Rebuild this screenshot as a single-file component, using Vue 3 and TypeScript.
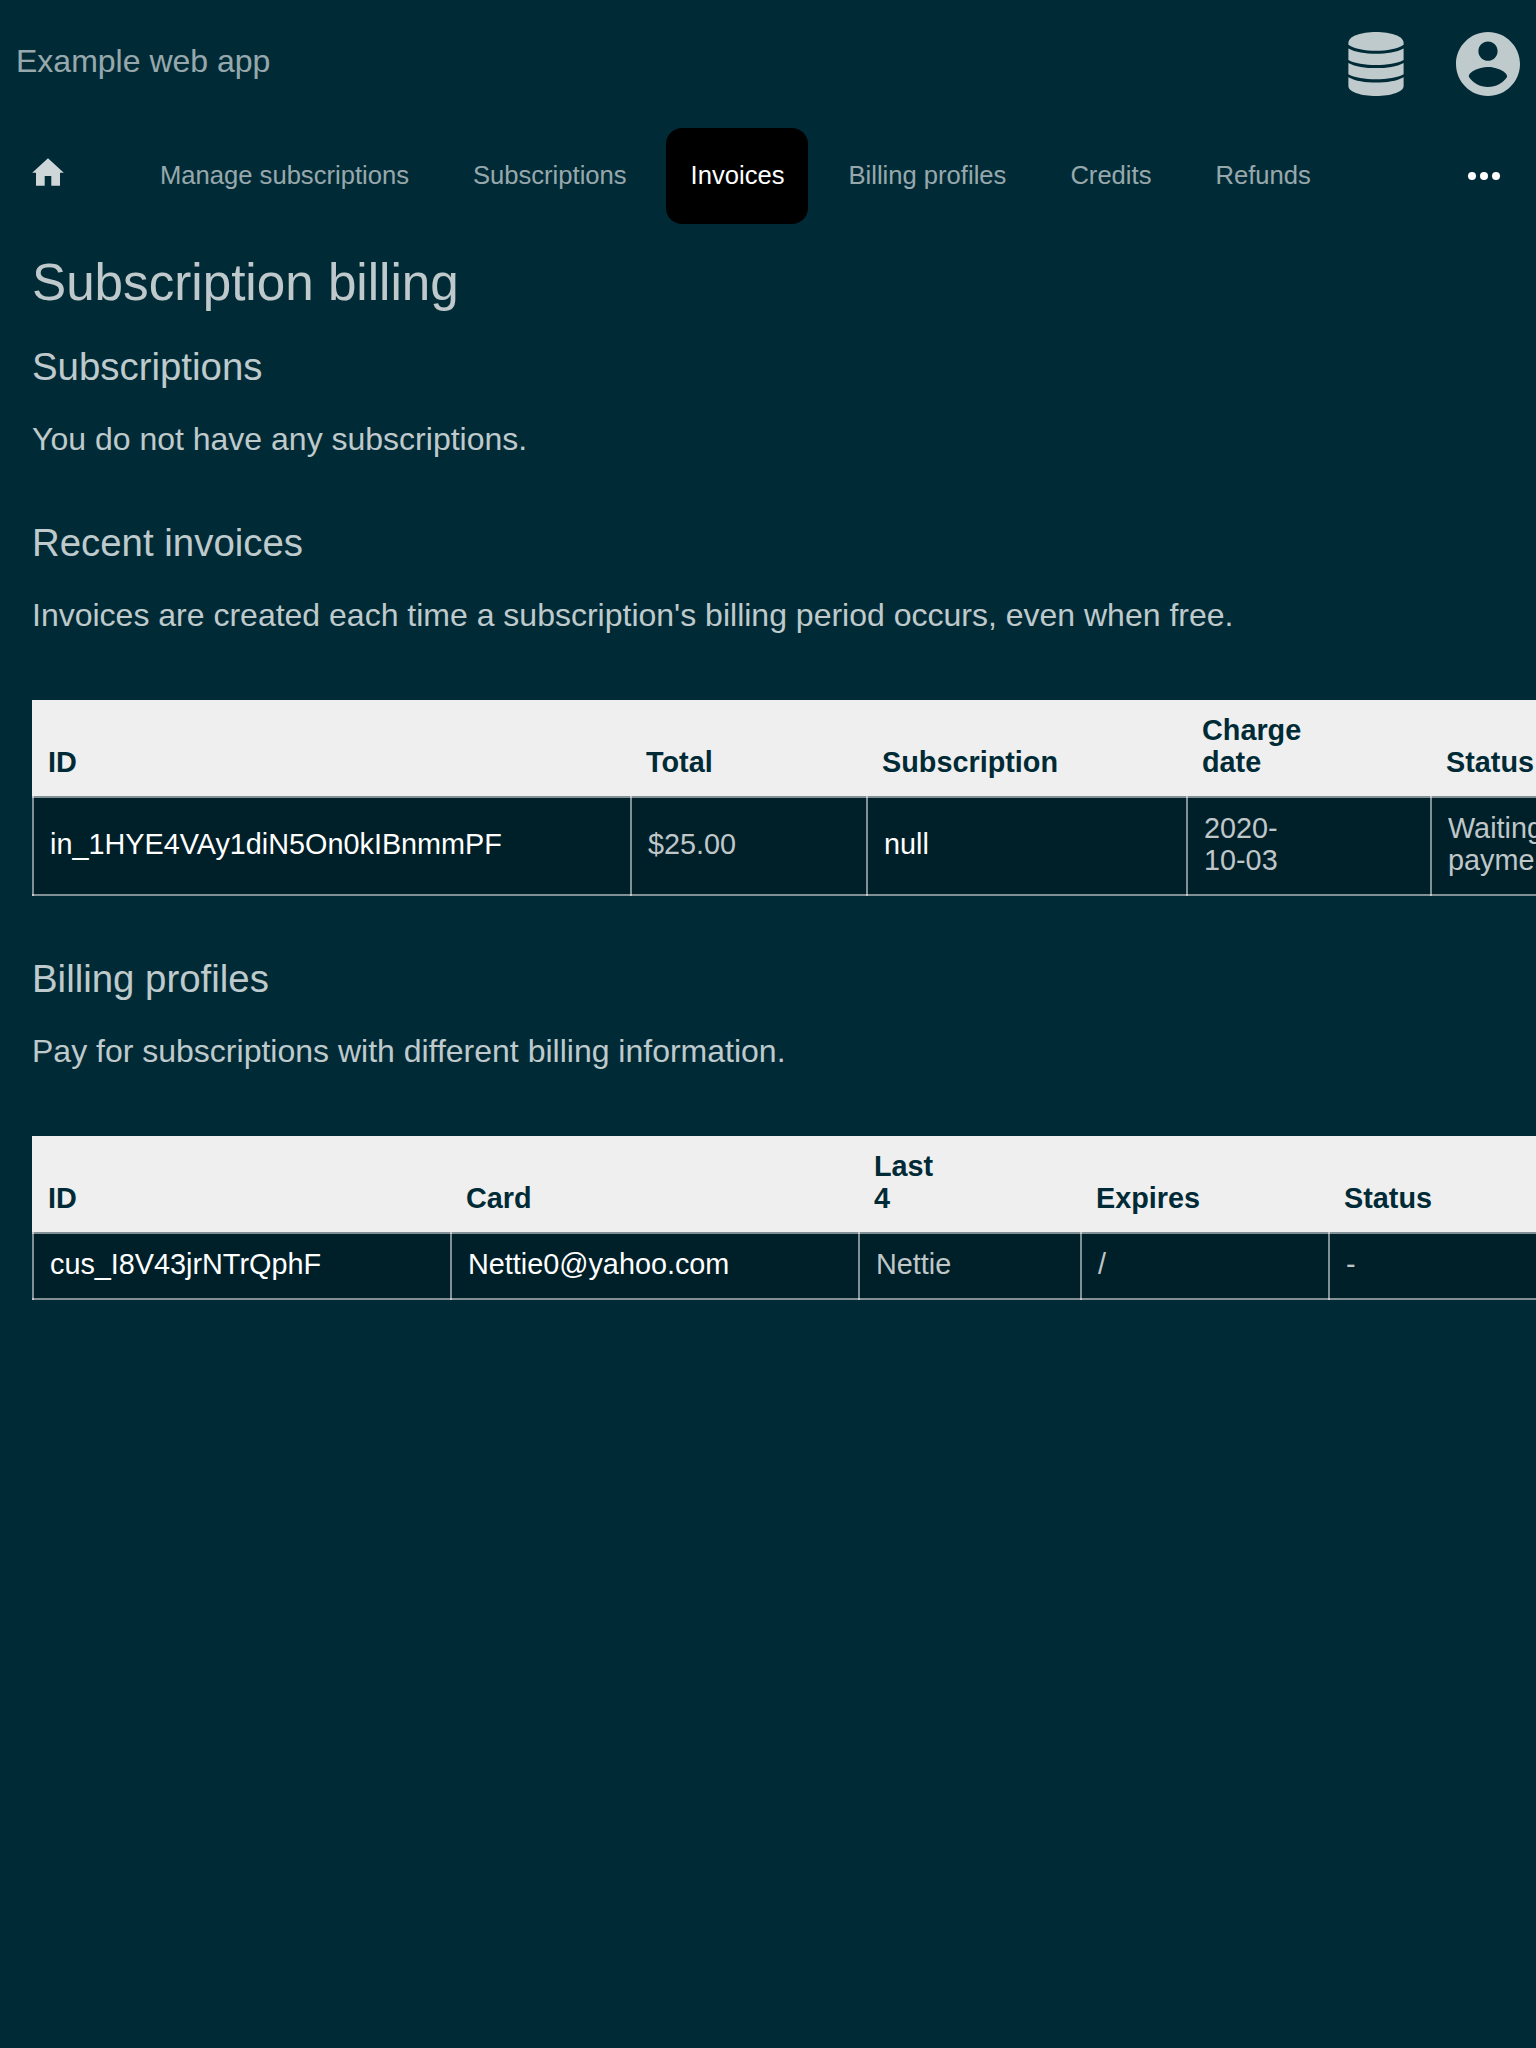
<script setup lang="ts">
interface Cell {
  text: string
  link?: boolean
}
interface Listing {
  widths: number[]
  heads: string[]
  cells: Cell[]
}

const links: string[] = ['Manage subscriptions', 'Subscriptions', 'Invoices', 'Billing profiles', 'Credits', 'Refunds']
const active = 'Invoices'

const invoices: Listing = {
  widths: [598, 236, 320, 244, 202],
  heads: ['ID', 'Total', 'Subscription', 'Charge\ndate', 'Status'],
  cells: [
    { text: 'in_1HYE4VAy1diN5On0kIBnmmPF', link: true },
    { text: '$25.00' },
    { text: 'null', link: true },
    { text: '2020-\n10-03' },
    { text: 'Waiting for\npayment' },
  ],
}

const profiles: Listing = {
  widths: [418, 408, 222, 248, 304],
  heads: ['ID', 'Card', 'Last\n4', 'Expires', 'Status'],
  cells: [
    { text: 'cus_I8V43jrNTrQphF', link: true },
    { text: 'Nettie0@yahoo.com', link: true },
    { text: 'Nettie' },
    { text: '/' },
    { text: '-' },
  ],
}

const sections: { title: string; note: string; listing?: Listing }[] = [
  { title: 'Subscriptions', note: 'You do not have any subscriptions.' },
  {
    title: 'Recent invoices',
    note: "Invoices are created each time a subscription's billing period occurs, even when free.",
    listing: invoices,
  },
  { title: 'Billing profiles', note: 'Pay for subscriptions with different billing information.', listing: profiles },
]
</script>

<template>
  <div class="page">
    <header class="top">
      <div class="brand">Example web app</div>
      <div class="menus">
        <svg class="db" viewBox="-0.4 0 56.8 64" width="56" height="64" preserveAspectRatio="none">
          <path d="M0 11C0 4 13 0 28 0S56 4 56 11v1.8C50 17 39 18.8 28 18.8S6 17 0 12.8z" />
          <path d="M0 16.6C7 20.4 17 21.8 28 21.8S49 20.4 56 16.6V28C50 31.4 39 33 28 33S6 31.4 0 28z" />
          <path d="M0 30.9C7 34.7 17 36.1 28 36.1S49 34.7 56 30.9V42.3C50 45.7 39 47.3 28 47.3S6 45.7 0 42.3z" />
          <path d="M0 45.2C7 49 17 50.6 28 50.6S49 49 56 45.2V54C56 60 43 64 28 64S0 60 0 54z" />
        </svg>
        <svg viewBox="2 2 20 20" width="64" height="64">
          <path
            d="M12 2C6.48 2 2 6.48 2 12s4.48 10 10 10 10-4.48 10-10S17.52 2 12 2zm0 3c1.66 0 3 1.34 3 3s-1.34 3-3 3-3-1.34-3-3 1.34-3 3-3zm0 14.2c-2.5 0-4.71-1.28-6-3.22.03-1.99 4-3.08 6-3.08 1.99 0 5.97 1.09 6 3.08-1.29 1.94-3.5 3.22-6 3.22z"
          />
        </svg>
      </div>
    </header>

    <nav class="nav">
      <a class="home">
        <svg viewBox="0 0 32 32" width="32" height="32">
          <path d="M16 2.3L31.8 16.7H28V29.7H19.3V20H12.7V29.7H4V16.7H.2z" />
        </svg>
      </a>
      <a v-for="link in links" :key="link" class="link" :class="{ active: link === active }">{{ link }}</a>
      <svg class="more" viewBox="0 0 32 8" width="32" height="8">
        <circle cx="4" cy="4" r="4" />
        <circle cx="16" cy="4" r="4" />
        <circle cx="28" cy="4" r="4" />
      </svg>
    </nav>

    <main class="content">
      <h1>Subscription billing</h1>
      <section v-for="s in sections" :key="s.title" :class="{ listed: s.listing }">
        <h2>{{ s.title }}</h2>
        <p>{{ s.note }}</p>
        <table v-if="s.listing">
          <colgroup>
            <col v-for="(w, i) in s.listing.widths" :key="i" :style="{ width: w + 'px' }" />
          </colgroup>
          <thead>
            <tr>
              <th v-for="h in s.listing.heads" :key="h">{{ h }}</th>
            </tr>
          </thead>
          <tbody>
            <tr>
              <td v-for="c in s.listing.cells" :key="c.text" :class="{ ref: c.link }">{{ c.text }}</td>
            </tr>
          </tbody>
        </table>
      </section>
    </main>
  </div>
</template>

<style>
html,
body {
  margin: 0;
  background: #002b36;
}
</style>

<style scoped>
.page {
  width: 100%;
  height: 2048px;
  overflow: hidden;
  background: #002b36;
  color: rgba(255, 255, 255, 0.75);
  font-family: "Liberation Sans", Arial, sans-serif;
  font-size: 32px;
}
.top {
  display: flex;
  justify-content: space-between;
  height: 128px;
  box-sizing: border-box;
  padding: 32px 16px;
}
.brand {
  line-height: 58px;
  color: rgba(255, 255, 255, 0.6);
}
.menus {
  display: flex;
  gap: 52px;
}
.menus svg {
  display: block;
  fill: #bfcacd;
}
.nav {
  display: flex;
  align-items: center;
  height: 96px;
  padding: 0 36px 0 32px;
}
.home {
  width: 96px;
  height: 32px;
  margin-top: -8px;
}
.home svg {
  display: block;
  fill: #ced6d8;
}
.link {
  height: 96px;
  box-sizing: border-box;
  margin: 0 8px;
  padding: 0 24px;
  border-radius: 16px;
  font-size: 25.6px;
  line-height: 95px;
  white-space: nowrap;
  color: rgba(255, 255, 255, 0.6);
}
.link.active {
  margin: 0 8.6px 0 7.4px;
  padding: 0 23.4px 0 24.6px;
  background: #000;
  color: #fff;
}
.more {
  margin-left: auto;
  fill: #fff;
}
.content {
  padding: 27px 0 0 32px;
}
h1,
h2,
p {
  margin: 0;
  font-weight: 400;
}
h1 {
  margin-bottom: 28px;
  font-size: 51.2px;
  line-height: 64px;
}
h2 {
  margin-bottom: 30px;
  font-size: 38.4px;
  line-height: 48px;
}
p {
  font-size: 32px;
  line-height: 36px;
}
section {
  margin-bottom: 62px;
}
section.listed {
  margin-bottom: 59px;
}
table {
  width: 1600px;
  margin-top: 67px;
  table-layout: fixed;
  border-collapse: separate;
  border-spacing: 0;
  font-size: 28.8px;
  line-height: 32px;
}
th {
  height: 64px;
  padding: 14px 16px 18px;
  background: #efefef;
  color: #002b36;
  font-weight: 700;
  text-align: left;
  vertical-align: bottom;
  white-space: pre-line;
}
td {
  --rule: linear-gradient(rgba(255, 255, 255, 0.5), rgba(255, 255, 255, 0.5));
  padding: 16px 16px 20px 18px;
  background:
    var(--rule) left top / 2px 100% no-repeat,
    var(--rule) left top / 100% 2px no-repeat,
    var(--rule) left bottom / 100% 2px no-repeat,
    #002029;
  vertical-align: middle;
  white-space: pre-line;
}
td.ref {
  color: #fff;
}
</style>
